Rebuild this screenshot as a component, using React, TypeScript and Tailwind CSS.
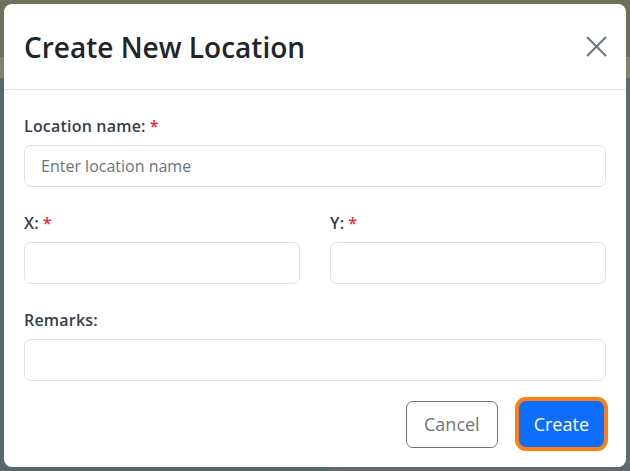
// Create New Location modal over a dimmed map

function Label({ text, required }: { text: string; required?: boolean }) {
  return (
    <label className="mb-[7px] block text-[16px] font-semibold leading-6 tracking-[0.2px] text-[#344054]">
      {text}
      {required && <span className="ml-1 text-[#f0262f]">*</span>}
    </label>
  )
}

function Field({ placeholder }: { placeholder?: string }) {
  return (
    <input
      type="text"
      placeholder={placeholder}
      className="block h-[42px] w-full rounded-[7px] border border-[#dee2e6] bg-white px-4 text-[16px] text-[#212529] outline-none placeholder:text-[#6c757d]"
    />
  )
}

export default function App() {
  return (
    <div
      className="relative h-[471px] w-[630px] overflow-hidden"
      style={{ fontFamily: '"Open Sans", "Noto Sans", sans-serif' }}
    >
      {/* dimmed map behind the modal */}
      <div className="flex h-full flex-col">
        <div className="h-[57px] bg-[#6f6f5c]" />
        <div className="h-[21px] bg-[#82826f]" />
        <div className="flex flex-1">
          <div className="flex-1 bg-[#56696e]" />
          <div className="w-[300px] bg-[#5e6a6c]" />
        </div>
      </div>

      <div className="absolute left-[4px] top-[4px] flex h-[463px] w-[622px] flex-col rounded-[8px] bg-white">
        <div className="flex h-[86px] items-center justify-between border-b border-[#dee2e6] px-5">
          <h3 className="text-[28px] font-semibold leading-8 text-[#212529]">Create New Location</h3>
          <button className="mr-[-1px] text-[#6c757d]" aria-label="Close">
            <svg width="21" height="21" viewBox="0 0 21 21" fill="none" stroke="currentColor" strokeWidth="2">
              <path d="M1 1L20 20M20 1L1 20" />
            </svg>
          </button>
        </div>

        <div className="flex flex-1 flex-col px-5 pt-6">
          <div className="mb-6">
            <Label text="Location name:" required />
            <Field placeholder="Enter location name" />
          </div>
          <div className="mb-6 grid grid-cols-2 gap-[30px]">
            <div>
              <Label text="X:" required />
              <Field />
            </div>
            <div>
              <Label text="Y:" required />
              <Field />
            </div>
          </div>
          <div>
            <Label text="Remarks:" />
            <Field />
          </div>

          <div className="mt-5 flex justify-end gap-[21px] pr-[2px]">
            <button className="h-[47px] rounded-[7px] border border-[#6c757d] px-[17px] text-[18px] text-[#6c757d]">
              Cancel
            </button>
            <button className="h-[46px] rounded-[7px] bg-[#0d6efd] px-[15px] text-[18px] text-white ring-4 ring-[#fd7e14]">
              Create
            </button>
          </div>
        </div>
      </div>
    </div>
  )
}
